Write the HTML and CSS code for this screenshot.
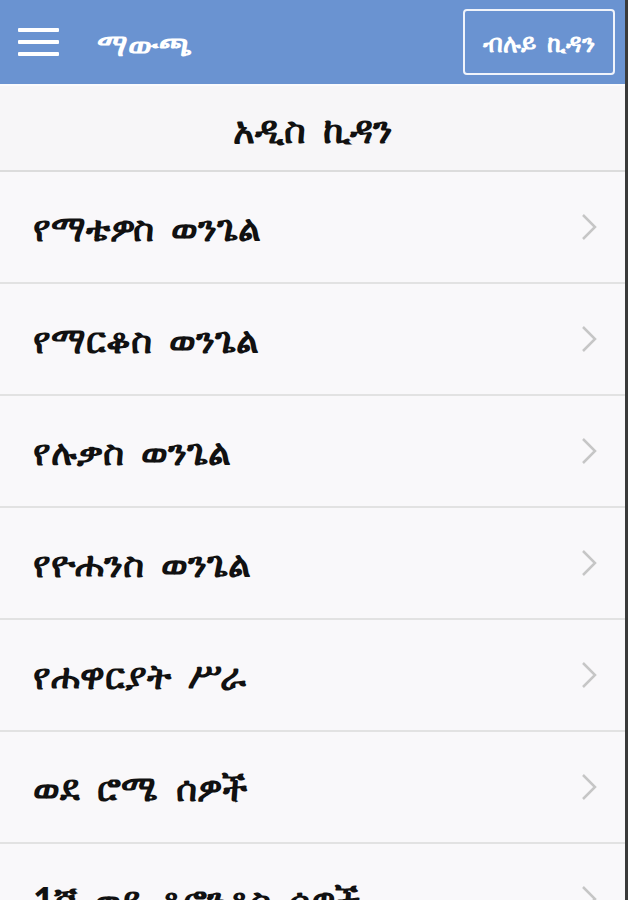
FILE: index.html
```html
<!DOCTYPE html>
<html lang="am">
<head>
    <meta charset="UTF-8">
    <meta name="viewport" content="width=device-width, initial-scale=1.0">
    <title>ማውጫ</title>
    <link rel="stylesheet" href="styles.css">
</head>
<body>
    <div class="app">
        <header class="topbar">
            <div class="menu">
                <span></span>
                <span></span>
                <span></span>
            </div>
            <div class="title">ማውጫ</div>
            <div class="switch">ብሉይ ኪዳን</div>
        </header>

        <div class="section">አዲስ ኪዳን</div>

        <ul class="books">
            <li class="book"><span>የማቴዎስ ወንጌል</span><svg class="chev" viewBox="0 0 16 28"><path d="M2 2 L14 14 L2 26"/></svg></li>
            <li class="book"><span>የማርቆስ ወንጌል</span><svg class="chev" viewBox="0 0 16 28"><path d="M2 2 L14 14 L2 26"/></svg></li>
            <li class="book"><span>የሉቃስ ወንጌል</span><svg class="chev" viewBox="0 0 16 28"><path d="M2 2 L14 14 L2 26"/></svg></li>
            <li class="book"><span>የዮሐንስ ወንጌል</span><svg class="chev" viewBox="0 0 16 28"><path d="M2 2 L14 14 L2 26"/></svg></li>
            <li class="book"><span>የሐዋርያት ሥራ</span><svg class="chev" viewBox="0 0 16 28"><path d="M2 2 L14 14 L2 26"/></svg></li>
            <li class="book"><span>ወደ ሮሜ ሰዎች</span><svg class="chev" viewBox="0 0 16 28"><path d="M2 2 L14 14 L2 26"/></svg></li>
            <li class="book"><span>1ኛ ወደ ቆሮንቶስ ሰዎች</span><svg class="chev" viewBox="0 0 16 28"><path d="M2 2 L14 14 L2 26"/></svg></li>
        </ul>
    </div>
</body>
</html>
```

FILE: styles.css
```css
:root {
    --bar: #6a93d1;
    --page: #f9f8fa;
    --line: #dcdcdc;
    --text: #111111;
    --chev: #c6c6c6;
}

body {
    margin: 0;
    background: #3a3a3a;
    font-family: "Noto Sans", "DejaVu Sans", sans-serif;
}

.app {
    width: 625px;
    height: 900px;
    overflow: hidden;
    background: var(--page);
}

/* top bar */
.topbar {
    display: flex;
    align-items: center;
    height: 84px;
    padding: 0 10px 0 18px;
    background: var(--bar);
    border-bottom: 2px solid #fbfbfd;
}

.menu {
    display: flex;
    flex-direction: column;
    gap: 8px;
    width: 41px;
}
.menu span {
    height: 4px;
    background: #fff;
    border-radius: 1px;
}

.title {
    margin-left: 38px;
    margin-top: 2px;
    color: #fff;
    font-size: 32px;
    font-weight: bold;
    flex: 1;
}

.switch {
    box-sizing: border-box;
    width: 152px;
    height: 66px;
    display: flex;
    align-items: center;
    justify-content: center;
    border: 2px solid #f0f4fb;
    border-radius: 4px;
    color: #fff;
    font-size: 25px;
    font-weight: bold;
    word-spacing: 4px;
}

/* section header */
.section {
    height: 84px;
    display: flex;
    align-items: center;
    justify-content: center;
    background: #f7f6f8;
    border-bottom: 2px solid var(--line);
    font-size: 37px;
    font-weight: bold;
    word-spacing: 8px;
    color: var(--text);
}

/* list */
.books {
    list-style: none;
    margin: 0;
    padding: 0;
}

.book {
    height: 110px;
    display: flex;
    align-items: center;
    justify-content: space-between;
    padding: 0 28px 0 33px;
    border-bottom: 2px solid #e2e2e2;
    font-size: 36px;
    font-weight: bold;
    word-spacing: 8px;
    color: var(--text);
}

.chev {
    width: 16px;
    height: 28px;
    fill: none;
    stroke: var(--chev);
    stroke-width: 2.5;
}
```
